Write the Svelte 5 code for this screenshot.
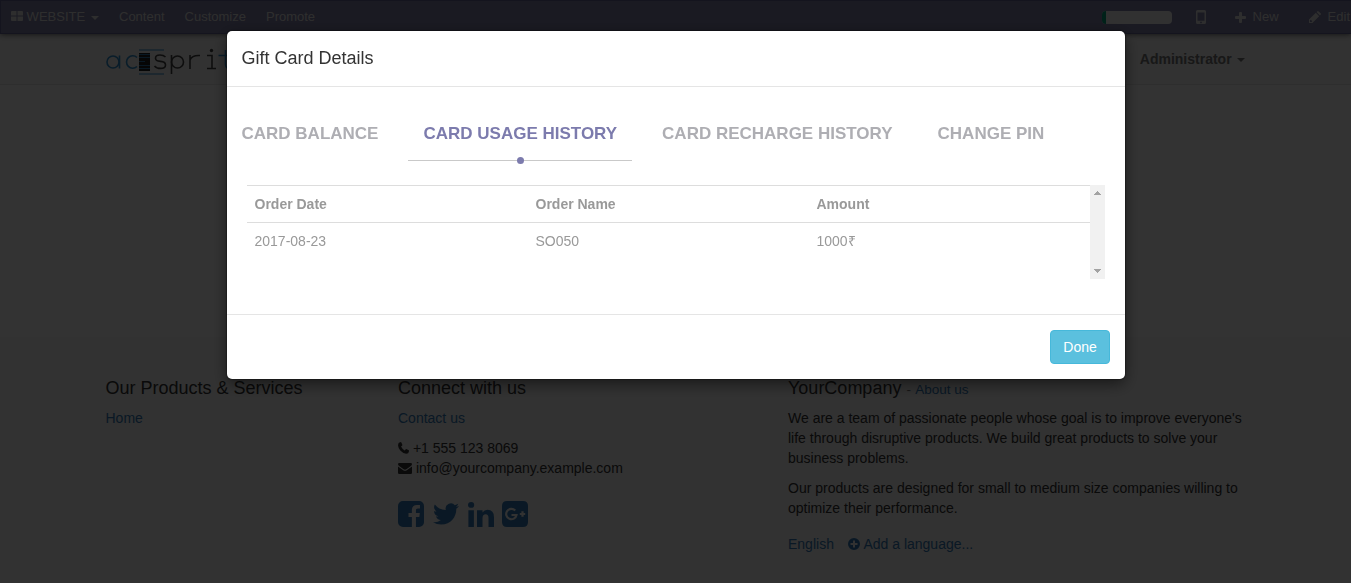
<script>
  const menu = ['Content', 'Customize', 'Promote'];
  const tabs = ['CARD BALANCE', 'CARD USAGE HISTORY', 'CARD RECHARGE HISTORY', 'CHANGE PIN'];
  let active = $state(1);
  const orders = [{ date: '2017-08-23', name: 'SO050', amount: '1000₹' }];
</script>

<div class="page">
  <nav class="admin">
    <span class="brand">
      <svg width="12" height="10" viewBox="0 0 12 10"><path d="M1 0h4.500v4.600H0V1Q0 0 1 0zM6.500 0H11q1 0 1 1v3.600H6.500zM0 5.500h5.500V10H1Q0 10 0 9zM6.500 5.500H12V9q0 1-1 1H6.500z" /></svg>
      WEBSITE <i class="caret"></i>
    </span>
    {#each menu as item}<a href="#top">{item}</a>{/each}
    <div class="tools">
      <span class="progress"><i></i></span>
      <svg class="mobile" width="10" height="14" viewBox="0 0 10 14"><path fill-rule="evenodd" d="M1.500 0h7Q10 0 10 1.500v11Q10 14 8.500 14h-7Q0 14 0 12.500v-11Q0 0 1.500 0zM1.500 2.500v8.300h7V2.500zM5 11.500a.9.9 0 1 0 0 1.800.9.9 0 0 0 0-1.800z" /></svg>
      <svg class="plus" width="11" height="11" viewBox="0 0 11 11"><path d="M4 1q0-1 1-1h1q1 0 1 1v3h3q1 0 1 1v1q0 1-1 1H7v3q0 1-1 1H5q-1 0-1-1V7H1Q0 7 0 6V5q0-1 1-1h3z" /></svg>
      <span>New</span>
      <svg class="pencil" width="12" height="12" viewBox="0 0 12 12"><path fill-rule="evenodd" d="M0 12V8.600L6.800 1.800l3.400 3.400L3.400 12zM1 9.500V11h1.500l.8-.8-1.500-1.500zM7.500 1.100L8.200.4q.7-.7 1.500 0l1.900 1.900q.7.700 0 1.500l-.7.700z" /></svg>
      <span>Edit</span>
    </div>
  </nav>

  <header>
    <svg class="logo" width="146" height="32" viewBox="0 0 146 32" stroke-width="1.600">
      <g stroke="#2f8fd0">
        <circle cx="7" cy="17" r="6" /><path d="M13.500 10.500v13M31 12.500a6.200 6.200 0 1 0 0 9M119.500 5v14q0 4.500 4 4.500h3M112.500 10.500h14" />
        <path d="M33 5h25M33 29h25" stroke-width="1" />
      </g>
      <path class="solid" d="M33 8h11v18H33z" />
      <path stroke="#2f78b0" stroke-width="1" d="M33 9.500h11M33 12.500h11M33 16.500h6M33 20.500h11M33 23.500h11" />
      <g stroke="#444">
        <path d="M59.500 12q-2-2-5.500-2-4.500 0-4.500 3.200 0 2.800 5 3.200t5 3.500q0 3.500-5 3.500-4 0-6-2.500" />
        <circle cx="71.500" cy="17" r="6" /><path d="M65.500 10v19M84 10v14M84 15q2-5 10-4.500M101 10.500h5v12.500M101 23.500h9" />
      </g>
      <circle class="dot" cx="105.500" cy="5.500" r="1.700" />
    </svg>
    <strong>Administrator <i class="caret"></i></strong>
  </header>

  <main></main>

  <footer>
    <section class="products">
      <h4>Our Products &amp; Services</h4>
      <a href="#home">Home</a>
    </section>
    <section class="connect">
      <h4>Connect with us</h4>
      <a href="#contact">Contact us</a>
      <address>
        <div><svg width="11" height="12" viewBox="0 0 11 12"><path d="M2.500 0q.7 0 1 .8l.8 1.900q.2.600-.3 1.100l-1 .8Q4.500 7.500 6.600 8.500l1-1.100q.5-.5 1.100-.2l1.700.9q.7.400.6 1.100-.3 2.500-2.800 2.500Q5 11.500 2.300 8.500.2 6 0 3.300 0 .6 2.500 0z" /></svg> +1 555 123 8069</div>
        <div><svg width="14" height="11" viewBox="0 0 14 11"><path d="M0 1.200Q0 0 1.200 0h11.600Q14 0 14 1.200 14 2.300 12.500 3.300L8.300 6.200q-1.300.9-2.600 0L1.500 3.300Q0 2.300 0 1.200zM0 3.600l5.200 3.600q1.800 1.200 3.600 0L14 3.600v6.200q0 1.200-1.200 1.200H1.200Q0 11 0 9.800z" /></svg> info@yourcompany.example.com</div>
      </address>
      <div class="social">
        <svg width="26" height="26" viewBox="0 0 1536 1536"><path d="M1248 0q119 0 203.500 84.500T1536 288v960q0 119-84.500 203.500T1248 1536h-188V941h199l30-232h-229V561q0-56 23.500-84t91.500-28l122-1V241q-63-9-178-9-136 0-217.500 80T820 538v171H620v232h200v595H288q-119 0-203.500-84.500T0 1248V288Q0 169 84.500 84.500T288 0z" /></svg>
        <svg width="26" height="22" viewBox="0 0 24 19.500"><path d="M24 2.300a9.800 9.800 0 0 1-2.800.8A4.900 4.900 0 0 0 23.300.4a9.800 9.800 0 0 1-3.100 1.200 4.900 4.900 0 0 0-8.400 4.500A14 14 0 0 1 1.700.9a4.900 4.900 0 0 0 1.500 6.600A4.900 4.900 0 0 1 1 6.900v.1a4.900 4.900 0 0 0 3.900 4.800 4.900 4.900 0 0 1-2.200.1 4.900 4.900 0 0 0 4.600 3.400A9.900 9.900 0 0 1 0 17.300a14 14 0 0 0 7.500 2.200c9.100 0 14-7.500 14-14v-.6A10 10 0 0 0 24 2.300z" /></svg>
        <svg width="26" height="25" viewBox="0 0 26 25"><path d="M.4 8.200h5.500v16.700H.4zM3.200 0q3 .1 3 2.900t-3.100 2.900Q0 5.600 0 2.900T3.200 0zM9 8.200h5.500v2.400q1.800-2.800 5-2.800 6.500 0 6.500 7.500v9.600h-5.500v-9q0-3.600-2.800-3.600-3.200 0-3.200 3.800v8.800H9z" /></svg>
        <svg width="26" height="26" viewBox="0 0 26 26"><path d="M5 0h16q5 0 5 5v16q0 5-5 5H5q-5 0-5-5V5q0-5 5-5z" /><path class="mark" d="M13.200 9.500a5.200 5.200 0 1 0 1.300 4.500H9.500M17.800 13h5.400M20.500 10.300v5.400" /></svg>
      </div>
    </section>
    <section class="company">
      <h4>YourCompany <small>- <a href="#about">About us</a></small></h4>
      <p>We are a team of passionate people whose goal is to improve everyone's life through disruptive products. We build great products to solve your business problems.</p>
      <p>Our products are designed for small to medium size companies willing to optimize their performance.</p>
      <div class="langs">
        <a href="#en">English</a>
        <a href="#add"><svg width="12" height="12" viewBox="0 0 12 12"><path fill-rule="evenodd" d="M6 0a6 6 0 1 1 0 12A6 6 0 0 1 6 0zM5 2.500V5H2.500v2H5v2.500h2V7h2.500V5H7V2.500z" /></svg> Add a language...</a>
      </div>
    </section>
  </footer>
</div>

<div class="backdrop">
  <div class="modal" role="dialog" aria-modal="true">
    <div class="title">Gift Card Details</div>
    <div class="body">
      <div class="tabs">
        {#each tabs as tab, i}
          <button class:active={i === active} onclick={() => (active = i)}>{tab}</button>
        {/each}
      </div>
      <div class="history">
        <table>
          <thead><tr><th>Order Date</th><th>Order Name</th><th>Amount</th></tr></thead>
          <tbody>
            {#each orders as o}<tr><td>{o.date}</td><td>{o.name}</td><td>{o.amount}</td></tr>{/each}
          </tbody>
        </table>
        <div class="scroll">
          <svg width="7" height="4" viewBox="0 0 7 4"><path d="M3 0h1v1h1v1h1v1h1v1H0V3h1V2h1V1h1z" /></svg>
          <svg width="7" height="4" viewBox="0 0 7 4"><path d="M0 0h7v1H6v1H5v1H4v1H3V3H2V2H1V1H0z" /></svg>
        </div>
      </div>
    </div>
    <div class="foot"><button>Done</button></div>
  </div>
</div>

<style>
  :global(body) { margin: 0; overflow: hidden; }
  .page, .backdrop { font: 14px/20px "Liberation Sans", Arial, sans-serif; box-sizing: border-box; }
  .page { width: 1351px; height: 583px; display: flex; flex-direction: column; background: #fff; color: #333; overflow: hidden; }
  svg { fill: currentColor; flex: none; }
  a { color: #337ab7; text-decoration: none; }
  .caret { display: inline-block; border: 4px solid transparent; border-top-color: currentColor; border-bottom: 0; vertical-align: middle; margin-left: 2px; }
  .admin { height: 34px; box-sizing: border-box; flex: none; display: flex; align-items: center; padding-left: 10px; background: #8080a8; border: 1px solid #666694; border-width: 1px 0 1px 1px; color: #e6e6e6; font-size: 13px; box-shadow: 0 1px 5px #0008; z-index: 1; white-space: nowrap; }
  .brand { width: 108px; }
  .brand .caret { margin-left: 2px; }
  .admin a { color: inherit; margin-right: 20px; }
  .tools { margin-left: auto; margin-right: 1px; display: flex; align-items: center; height: 30px; }
  .progress { width: 70px; height: 13px; background: #f5f5f5; border-radius: 4px; overflow: hidden; margin-right: 24px; }
  .progress i { display: block; width: 4px; height: 100%; background: #00a67d; }
  .plus { margin: 0 7px 0 29px; }
  .pencil { margin: 0 7px 0 30px; }
  header { height: 51px; flex: none; box-sizing: border-box; display: flex; justify-content: space-between; background: #f8f8f8; border-bottom: 1px solid #e7e7e7; padding: 10px 105.500px 0; }
  .logo { margin-top: 1px; overflow: visible; fill: none; }
  .solid { fill: #222; }
  .dot { fill: #444; }
  header strong { line-height: 30px; color: #777; }
  header .caret { margin-left: 1.500px; margin-right: .5px; }
  main { height: 252px; flex: none; }
  footer { flex: 1; display: flex; background: #f8f8f8; padding: 41px 0 0 105.500px; }
  section { flex: none; }
  h4 { font-size: 18px; font-weight: 400; line-height: 20px; height: 20px; margin: 0 0 10px; }
  h4 small { font-size: 13.500px; color: #777; }
  h4 small a { margin-left: .5px; }
  .products { width: 292.500px; }
  .connect { width: 390px; }
  .company { width: 460px; }
  p { margin: 0 0 10px; }
  address { font-style: normal; margin-top: 10px; }
  address svg { vertical-align: -1px; }
  .social { display: flex; align-items: center; gap: 9px; margin-top: 23px; color: #337ab7; }
  .social svg:nth-child(3) { margin-right: -1px; }
  .mark { fill: none; stroke: #f8f8f8; stroke-width: 2.2; }
  .langs { display: flex; gap: 14px; margin-top: 16px; }
  .langs svg { vertical-align: -1px; margin-right: .4px; }
  .backdrop { position: fixed; inset: 0; z-index: 2; background: rgba(0, 0, 0, .8); padding-top: 31px; }
  .modal { width: 898px; height: 348px; margin-left: 227px; box-sizing: border-box; background: #fff; border-radius: 5px; box-shadow: 0 5px 15px rgba(0, 0, 0, .5), 0 0 2px #000; color: #333; display: flex; flex-direction: column; }
  .title { height: 56px; box-sizing: border-box; flex: none; font-size: 18px; line-height: 26px; padding: 14px 14.500px 0; border-bottom: 1px solid #e5e5e5; }
  .body { flex: 1; }
  .tabs { display: flex; height: 74px; margin-bottom: 24px; margin-left: -.5px; }
  .tabs button { position: relative; border: 0; border-bottom: 1px solid transparent; background: none; margin-right: 15px; padding: 20px 15px 0; font: bold 17px/20px "Liberation Sans", Arial, sans-serif; color: #aeaeb3; }
  .tabs button.active { color: #7c7bad; border-bottom-color: #c9c9c9; }
  .active::after { content: ''; position: absolute; width: 7px; height: 7px; border-radius: 50%; background: #7c7bad; bottom: -4px; left: calc(50% - 3.5px); }
  .history { display: flex; margin-left: 20px; width: 858px; height: 94px; }
  table { width: 843px; border-collapse: collapse; table-layout: fixed; align-self: flex-start; color: #999; }
  th, td { text-align: left; height: 36px; padding: 0 7.500px; border-top: 1px solid #ddd; }
  .scroll { width: 15px; background: #f1f1f1; display: flex; flex-direction: column; justify-content: space-between; align-items: center; padding: 6px 0; box-sizing: border-box; color: #a3a3a3; }
  .foot { height: 65px; box-sizing: border-box; flex: none; padding: 15px; border-top: 1px solid #e5e5e5; text-align: right; }
  .foot button { width: 60px; height: 34px; border: 1px solid #46b8da; border-radius: 4px; background: #5bc0de; color: #fff; font: 14px "Liberation Sans", Arial, sans-serif; padding: 0; }
</style>
